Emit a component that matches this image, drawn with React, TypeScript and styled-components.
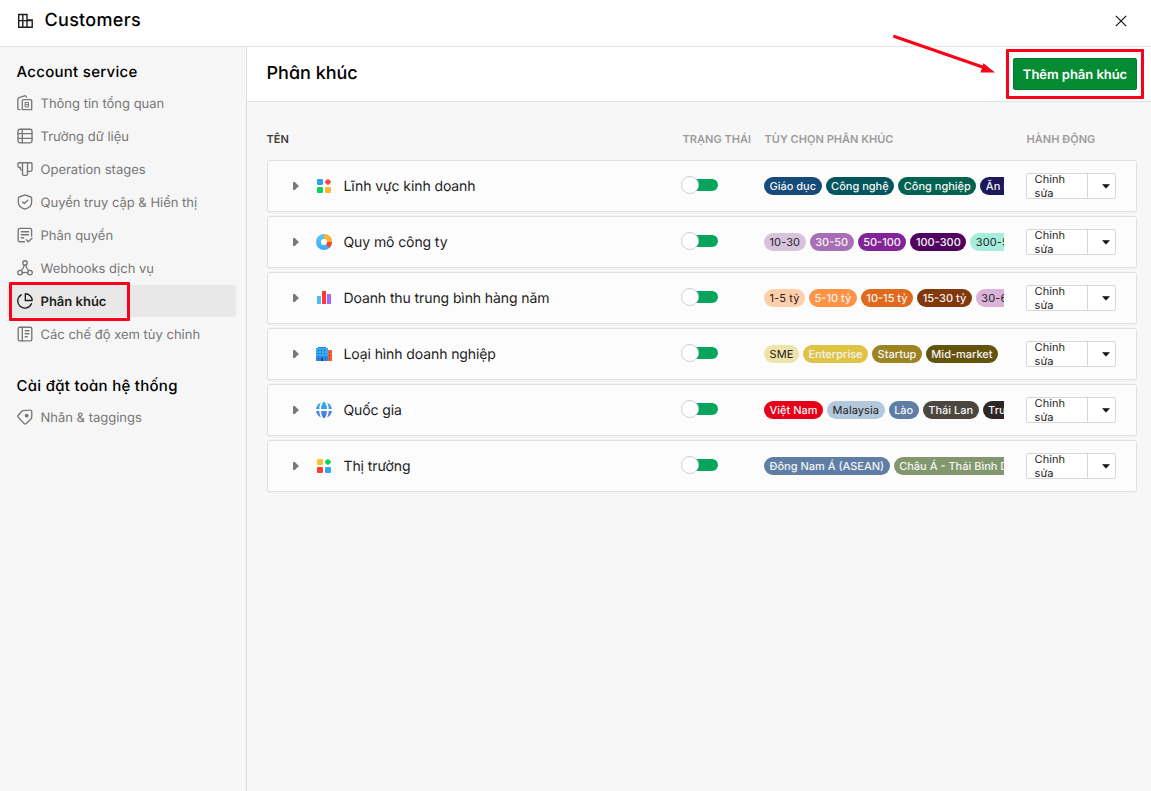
import { ReactNode } from 'react';
import styled, { createGlobalStyle } from 'styled-components';

type Tag = {
  label: string;
  color: string;
  dark?: boolean;
}

type Segment = {
  name: string;
  icon: ReactNode;
  tags: Tag[];
}

type MenuItem = {
  label: string;
  icon: ReactNode;
  active?: boolean;
}

const Line = ({ children }: { children: ReactNode }): JSX.Element => (
  <svg
    width='16'
    height='16'
    viewBox='0 0 16 16'
    fill='none'
    stroke='currentColor'
    strokeWidth='1.35'
    strokeLinecap='round'
    strokeLinejoin='round'
  >
    {children}
  </svg>
);

const SquaresIcon = ({ colors }: { colors: string[] }): JSX.Element => (
  <svg width='16' height='16' viewBox='0 0 16 16'>
    <rect x='1' y='1' width='6' height='6' rx='1.2' fill={colors[0]} />
    <rect x='9.4' y='1.5' width='5' height='5' rx='1.3' fill={colors[1]} transform='rotate(45 11.9 4)' />
    <rect x='1' y='9' width='6' height='6' rx='1.2' fill={colors[2]} />
    <rect x='9' y='9' width='6' height='6' rx='1.2' fill={colors[3]} />
  </svg>
);

const DonutIcon = (): JSX.Element => (
  <svg width='16' height='16' viewBox='0 0 16 16'>
    <defs>
      <linearGradient id='donut' x1='0' y1='0' x2='0' y2='1'>
        <stop offset='0' stopColor='#5ec8fb' />
        <stop offset='1' stopColor='#3ea8f5' />
      </linearGradient>
    </defs>
    <circle cx='8' cy='8' r='8' fill='url(#donut)' />
    <path d='M8 0a8 8 0 0 1 8 8H8z' fill='#fbb62d' />
    <path d='M16 8a8 8 0 0 1-2.6 5.9L8 8z' fill='#f8422f' />
    <circle cx='8' cy='8' r='3.1' fill='#fcfcfc' />
  </svg>
);

const BarsIcon = (): JSX.Element => (
  <svg width='16' height='16' viewBox='0 0 16 16'>
    <rect x='1' y='6' width='4' height='8' fill='#4fbcfa' />
    <rect x='6' y='1' width='4' height='13' fill='#fb3a35' />
    <rect x='11' y='4' width='4' height='10' fill='#a768f8' />
  </svg>
);

const OfficeIcon = (): JSX.Element => (
  <svg width='16' height='16' viewBox='0 0 16 16'>
    <rect x='11' y='4' width='5' height='11' fill='#f4622f' />
    <path d='M13 6h1v1h-1zM13 9h1v1h-1zM13 12h1v1h-1z' fill='#8c2e2b' />
    <rect x='2' y='1' width='8' height='1.5' fill='#2b86d6' />
    <rect x='0' y='2' width='12' height='13' fill='#35a9f5' />
    <rect x='0' y='10' width='12' height='5' fill='#2c88e0' />
    <path
      d='M2 4h1v1H2zM5 4h1v1H5zM8 4h1v1H8zM2 7h1v1H2zM5 7h1v1H5zM8 7h1v1H8zM2 12h1v1H2zM9 12h1v1H9zM5 12h2v3H5z'
      fill='#184a91'
    />
  </svg>
);

const GlobeIcon = (): JSX.Element => (
  <svg width='16' height='16' viewBox='0 0 16 16'>
    <defs>
      <linearGradient id='globe' x1='0' y1='0' x2='0' y2='1'>
        <stop offset='0' stopColor='#2fb1ef' />
        <stop offset='1' stopColor='#4d70e6' />
      </linearGradient>
    </defs>
    <circle cx='8' cy='8' r='8' fill='url(#globe)' />
    <path
      d='M0 8h16M6.6 -1C3.2 4 3.2 12 6.600 17M9.400 -1C12.800 4 12.800 12 9.400 17'
      fill='none'
      stroke='#fcfcfc'
      strokeWidth='1.8'
    />
  </svg>
);

const accountMenu: MenuItem[] = [
  {
    label: 'Thông tin tổng quan',
    icon: (
      <Line>
        <path d='M3 14.6H2.2A1.4 1.4 0 0 1 .8 13.2V4.4A1.9 1.9 0 0 1 2 2.7L7.6 .8A1.4 1.4 0 0 1 9.4 2.1' />
        <path d='M5.3 14.6V6.2A1.6 1.6 0 0 1 6.9 4.6H13.2A1.5 1.5 0 0 1 14.7 6.1V14.6Z' />
        <path d='M8.5 7.500H11.500V12H8.500ZM8.500 9.700H11.500' strokeWidth='1' />
      </Line>
    ),
  },
  {
    label: 'Trường dữ liệu',
    icon: (
      <Line>
        <rect x='1' y='1.2' width='14' height='13.6' rx='1.8' />
        <path d='M1 5.6H15M1 10.3H15M5.3 1.2V14.8' />
      </Line>
    ),
  },
  {
    label: 'Operation stages',
    icon: (
      <Line>
        <path d='M5.5 8.8H4.6A1.3 1.3 0 0 1 3.3 7.500V6.500H2.300A1.300 1.300 0 0 1 1 5.200V2.700A1 1 0 0 1 2 1.700H14A1 1 0 0 1 15 2.700V8.900A1.400 1.400 0 0 1 13.600 10.300H10.500' />
        <path d='M5.500 1.700V13A1.300 1.300 0 0 0 6.800 14.300H9.200A1.300 1.300 0 0 0 10.500 13V1.700' />
      </Line>
    ),
  },
  {
    label: 'Quyền truy cập & Hiển thị',
    icon: (
      <Line>
        <path d='M8 .9L13.7 3A1.3 1.3 0 0 1 14.6 4.3V8.5C14.6 11.8 11.8 14 8 15.2C4.2 14 1.4 11.8 1.4 8.5V4.3A1.3 1.3 0 0 1 2.3 3Z' />
        <path d='M5.5 7.9L7.3 9.6L10.8 6.3' />
      </Line>
    ),
  },
  {
    label: 'Phân quyền',
    icon: (
      <Line>
        <path d='M14.6 9V2.8A1.5 1.5 0 0 0 13.1 1.3H2.7A1.5 1.5 0 0 0 1.2 2.8V13.2A1.5 1.5 0 0 0 2.7 14.7H7.5' />
        <path d='M4.3 4.7H11.5M4.3 7.7H11.5M4.3 10.7H6.7M9.3 12.7L11.3 14.7L15 11.2' />
      </Line>
    ),
  },
  {
    label: 'Webhooks dịch vụ',
    icon: (
      <Line>
        <circle cx='8' cy='3' r='2.2' />
        <circle cx='3' cy='12.6' r='2.3' />
        <circle cx='13' cy='12.6' r='2.3' />
        <path d='M7.2 5.1C7 7.5 5.8 9.2 4.2 10.5M8.8 5.1C9 7.5 10.2 9.2 11.8 10.5M5.3 13C7 12.2 9 12.2 10.7 13' />
      </Line>
    ),
  },
  {
    label: 'Phân khúc',
    icon: (
      <Line>
        <path d='M8.3 .8A6.7 6.7 0 0 1 15.2 7.5H8.3Z' />
        <path d='M4.3 1.8A7.1 7.1 0 1 0 14.4 10.7' />
      </Line>
    ),
    active: true,
  },
  {
    label: 'Các chế độ xem tùy chỉnh',
    icon: (
      <Line>
        <rect x='1.2' y='1.2' width='13.6' height='13.6' rx='1.5' />
        <path d='M5.3 1.2V14.8M8.2 4.7H12M8.2 7.7H12M8.2 10.7H10.2' />
      </Line>
    ),
  },
];

const systemMenu: MenuItem[] = [
  {
    label: 'Nhãn & taggings',
    icon: (
      <Line>
        <path d='M6.2 1.6L12.9 1.2A1.7 1.7 0 0 1 14.8 3.1L14.7 8.6A2 2 0 0 1 14 10.1L9.3 14.6A1.6 1.6 0 0 1 7.1 14.5L1.3 8.4A1.5 1.5 0 0 1 1.3 6.3L4.9 2.3A2 2 0 0 1 6.2 1.6Z' />
        <circle cx='9.7' cy='6.6' r='1.3' fill='currentColor' />
      </Line>
    ),
  },
];

const segments: Segment[] = [
  {
    name: 'Lĩnh vực kinh doanh',
    icon: <SquaresIcon colors={['#2ca2e9', '#fb4a3a', '#06d45f', '#fcb72e']} />,
    tags: [
      { label: 'Giáo dục', color: '#154a7a' },
      { label: 'Công nghệ', color: '#02555c' },
      { label: 'Công nghiệp', color: '#036150' },
      { label: 'Ăn uống', color: '#1d185a' },
    ],
  },
  {
    name: 'Quy mô công ty',
    icon: <DonutIcon />,
    tags: [
      { label: '10-30', color: '#d8c3dc', dark: true },
      { label: '30-50', color: '#a86fb5' },
      { label: '50-100', color: '#832398' },
      { label: '100-300', color: '#51045f' },
      { label: '300-500', color: '#a5eddc', dark: true },
    ],
  },
  {
    name: 'Doanh thu trung bình hàng năm',
    icon: <BarsIcon />,
    tags: [
      { label: '1-5 tỷ', color: '#ffcfab', dark: true },
      { label: '5-10 tỷ', color: '#ff9345' },
      { label: '10-15 tỷ', color: '#e2691c' },
      { label: '15-30 tỷ', color: '#81380a' },
      { label: '30-60 tỷ', color: '#d9b3d8', dark: true },
    ],
  },
  {
    name: 'Loại hình doanh nghiệp',
    icon: <OfficeIcon />,
    tags: [
      { label: 'SME', color: '#eee3a8', dark: true },
      { label: 'Enterprise', color: '#dfc344' },
      { label: 'Startup', color: '#9c8423' },
      { label: 'Mid-market', color: '#64530e' },
    ],
  },
  {
    name: 'Quốc gia',
    icon: <GlobeIcon />,
    tags: [
      { label: 'Việt Nam', color: '#e60019' },
      { label: 'Malaysia', color: '#b3c7dd', dark: true },
      { label: 'Lào', color: '#5f7ea6' },
      { label: 'Thái Lan', color: '#4c4641' },
      { label: 'Trung Quốc', color: '#2d2825' },
    ],
  },
  {
    name: 'Thị trường',
    icon: <SquaresIcon colors={['#fcc02e', '#06d45f', '#fb3e31', '#2da9ef']} />,
    tags: [
      { label: 'Đông Nam Á (ASEAN)', color: '#5f7ea6' },
      { label: 'Châu Á - Thái Bình Dương', color: '#83976f' },
    ],
  },
];

const Menu = ({ items }: { items: MenuItem[] }): JSX.Element => (
  <MenuList>
    {items.map(({ label, icon, active }) => (
      <MenuLink key={label} $active={active}>
        {icon}
        <MenuLabel>{label}</MenuLabel>
        {active && <MenuMark />}
      </MenuLink>
    ))}
  </MenuList>
);

const SegmentRow = ({ name, icon, tags }: Segment): JSX.Element => (
  <Row>
    <NameCell>
      <Caret />
      {icon}
      <SegmentName>{name}</SegmentName>
    </NameCell>
    <Toggle role='switch' aria-checked>
      <Knob />
    </Toggle>
    <Tags>
      {tags.map(({ label, color, dark }) => (
        <TagPill key={label} $color={color} $dark={dark}>{label}</TagPill>
      ))}
    </Tags>
    <SplitButton>
      <EditButton>Chỉnh sửa</EditButton>
      <DropButton>
        <svg width='8' height='5' viewBox='0 0 8 5'>
          <path d='M.5 .5H7.5L4 4.3Z' fill='#111' stroke='#111' strokeWidth='.5' strokeLinejoin='round' />
        </svg>
      </DropButton>
    </SplitButton>
  </Row>
);

const App = (): JSX.Element => (
  <>
    <GlobalStyle />
    <Page>
      <TopBar>
        <svg width='16' height='16' viewBox='0 0 16 16' fill='none' stroke='#1d1d1d' strokeWidth='1.4'>
          <path d='M1.7 1.5H10V14.3H1.7ZM10 7H15.2V14.3H10M5.8 1.5V14.3M1.7 7.6H15.2' />
        </svg>
        <AppName>Customers</AppName>
        <svg width='12' height='12' viewBox='0 0 12 12' stroke='#111' strokeWidth='1.2'>
          <path d='M.8 .8L11.2 11.2M11.2 .8L.8 11.2' />
        </svg>
      </TopBar>
      <Body>
        <Sidebar>
          <MenuTitle>Account service</MenuTitle>
          <Menu items={accountMenu} />
          <MenuTitle>Cài đặt toàn hệ thống</MenuTitle>
          <Menu items={systemMenu} />
        </Sidebar>
        <Main>
          <MainHeader>
            <Title>Phân khúc</Title>
            <AddButton>
              Thêm phân khúc
              <ButtonMark />
              <Arrow width='106' height='44' viewBox='0 0 106 44'>
                <path d='M2.5 2.5L92 33.5' stroke='#fc0019' strokeWidth='3' strokeLinecap='round' />
                <path d='M103 38.5L88.5 38.5L91.5 29.3Z' fill='#fc0019' />
              </Arrow>
            </AddButton>
          </MainHeader>
          <Table>
            <TableHead>
              <HeadCell $dark>TÊN</HeadCell>
              <HeadCell>TRẠNG THÁI</HeadCell>
              <HeadCell>TÙY CHỌN PHÂN KHÚC</HeadCell>
              <HeadCell>HÀNH ĐỘNG</HeadCell>
            </TableHead>
            {segments.map((segment) => <SegmentRow key={segment.name} {...segment} />)}
          </Table>
        </Main>
      </Body>
    </Page>
  </>
);

const GlobalStyle = createGlobalStyle`
  * {
    box-sizing: border-box;
  }

  body {
    margin: 0;
    font-family: Inter, 'Noto Sans', sans-serif;
    text-rendering: geometricPrecision;
    color: #1d1d1d;
  }

  svg {
    flex: none;
  }
`;

const Page = styled.div`
  display: flex;
  flex-direction: column;
  height: 791px;
  overflow: hidden;
  background-color: #fff;
`;

const TopBar = styled.header`
  display: flex;
  align-items: center;
  height: 47px;
  padding: 0 24px 5px 17px;
  border-bottom: 1px solid #e2e2e2;
`;

const AppName = styled.div`
  flex: 1;
  margin-left: 11.5px;
  padding-top: 1px;
  font-size: 18px;
  font-weight: 500;
  line-height: 24px;
  letter-spacing: 0.3px;
  font-feature-settings: 'cv11';
  color: #000;
`;

const Body = styled.div`
  display: flex;
  flex: 1;
`;

const Sidebar = styled.aside`
  width: 247px;
  padding: 12px 10px 0 7px;
  border-right: 1px solid #dcdcdc;
  background-color: #f6f6f6;
`;

const MenuTitle = styled.div`
  padding: 2px 9.5px 4px;
  font-size: 15px;
  font-weight: 500;
  line-height: 22px;
  letter-spacing: 0.28px;
  font-feature-settings: 'cv11';
  color: #000;
`;

const MenuList = styled.div`
  display: flex;
  flex-direction: column;
  gap: 1px;
  margin-bottom: 23px;
`;

const MenuLink = styled.div<{ $active?: boolean }>`
  position: relative;
  display: flex;
  align-items: center;
  gap: 7.5px;
  height: 32px;
  padding-left: 10px;
  border-radius: 3px;
  font-size: 13px;
  font-weight: ${({ $active }) => ($active ? 600 : 400)};
  color: ${({ $active }) => ($active ? '#1d1d1d' : '#777')};
  background-color: ${({ $active }) => ($active ? '#e8e8e8' : 'transparent')};
`;

const MenuLabel = styled.span`
  padding-top: 2px;
`;

const MenuMark = styled.div`
  position: absolute;
  top: -3px;
  left: 2px;
  width: 121px;
  height: 39px;
  border: 3px solid #fc0019;
  border-radius: 1px;
`;

const Main = styled.main`
  flex: 1;
  background-color: #f7f7f7;
`;

const MainHeader = styled.div`
  display: flex;
  align-items: center;
  justify-content: space-between;
  height: 55px;
  padding: 0 14px 0 19.5px;
  border-bottom: 1px solid #e2e2e2;
  background-color: #fff;
`;

const Title = styled.div`
  margin-top: -1px;
  font-size: 18px;
  font-weight: 500;
  font-feature-settings: 'cv11';
  color: #000;
`;

const AddButton = styled.button`
  position: relative;
  width: 124px;
  height: 32px;
  padding: 2px 0 0;
  border: 1px solid #057a2c;
  border-radius: 2px;
  font: 600 13px Inter, sans-serif;
  text-rendering: geometricPrecision;
  letter-spacing: -0.04px;
  white-space: nowrap;
  color: #fff;
  background-color: #058c32;
`;

const ButtonMark = styled.div`
  position: absolute;
  top: -10px;
  left: -8px;
  width: 138px;
  height: 50px;
  border: 3px solid #fc0019;
  border-radius: 1px;
`;

const Arrow = styled.svg`
  position: absolute;
  top: -25px;
  left: -122px;
`;

const Table = styled.div`
  padding: 26px 14px 0 20px;
`;

const TableHead = styled.div`
  display: grid;
  grid-template-columns: 416px 82px 262px 1fr;
  height: 32px;
`;

const HeadCell = styled.div<{ $dark?: boolean }>`
  margin-left: -0.5px;
  font-size: 11px;
  font-weight: 600;
  line-height: 23px;
  letter-spacing: 0.03px;
  color: ${({ $dark }) => ($dark ? '#3c3c3c' : '#9c9c9c')};
`;

const Row = styled.div`
  display: grid;
  grid-template-columns: 413px 83px 240px 90px;
  align-items: center;
  height: 52px;
  margin-bottom: 4px;
  border: 1px solid #e0e0e0;
  border-radius: 3px;
  background-color: #fcfcfc;
  box-shadow: 0 1px 2px rgba(0, 0, 0, 0.04);
`;

const NameCell = styled.div`
  display: flex;
  align-items: center;
  padding-left: 25px;
`;

const Caret = styled.div`
  width: 6px;
  height: 8px;
  margin-right: 17px;
  background-color: #7b7b7b;
  clip-path: polygon(0 0, 30% 0, 100% 50%, 30% 100%, 0 100%);
`;

const SegmentName = styled.div`
  margin-left: 11.5px;
  padding-top: 2px;
  font-size: 14px;
  line-height: 20px;
  letter-spacing: -0.1px;
`;

const Toggle = styled.div`
  display: flex;
  align-items: center;
  width: 34px;
  height: 12px;
  margin: -2px 0 0 3px;
  border-radius: 6px;
  background-color: #05a55c;
`;

const Knob = styled.div`
  width: 18px;
  height: 18px;
  margin-left: -3px;
  border: 1px solid #d0d0d0;
  border-radius: 50%;
  background-color: #fff;
`;

const Tags = styled.div`
  display: flex;
  gap: 4px;
  overflow: hidden;
`;

const TagPill = styled.div<{ $color: string; $dark?: boolean }>`
  flex: none;
  height: 18px;
  padding: 0 5.5px;
  border-radius: 9px;
  font-size: 11px;
  font-weight: ${({ $dark }) => ($dark ? 400 : 550)};
  line-height: 18px;
  letter-spacing: ${({ $dark }) => ($dark ? '0.12px' : '0')};
  color: ${({ $dark }) => ($dark ? '#222' : '#f4f4f4')};
  background-color: ${({ $color }) => $color};
`;

const SplitButton = styled.div`
  display: flex;
  width: 90px;
  height: 26px;
  margin-left: 22px;
  border: 1px solid #d6d6d6;
  border-radius: 2px;
  overflow: hidden;
  background-color: #fff;
`;

const EditButton = styled.div`
  display: flex;
  align-items: center;
  width: 61px;
  padding: 0 16px 0 7.5px;
  border-right: 1px solid #d6d6d6;
  font-size: 11px;
  line-height: 14px;
  letter-spacing: 0.1px;
`;

const DropButton = styled.div`
  display: flex;
  flex: 1;
  align-items: center;
  justify-content: center;
  padding-left: 8px;
`;

export default App;
